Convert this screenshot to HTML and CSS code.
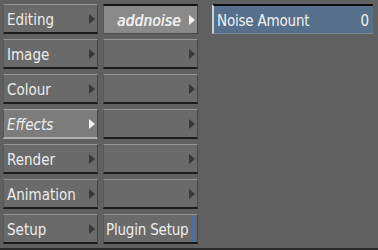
FILE: index.html
```html
<!DOCTYPE html>
<html lang="en">
<head>
  <meta charset="UTF-8">
  <title>addnoise</title>
  <link rel="stylesheet" href="styles.css">
</head>
<body>
  <section class="panel">
    <!-- Each row: menu button, submenu button, parameter cell -->
    <button class="btn">Editing<span class="arrow"></span></button>
    <button class="btn btn-active">addnoise<span class="arrow"></span></button>
    <div class="field"><span>Noise Amount</span><span>0</span></div>

    <button class="btn">Image<span class="arrow"></span></button>
    <button class="btn"><span class="arrow"></span></button>
    <div class="empty"></div>

    <button class="btn">Colour<span class="arrow"></span></button>
    <button class="btn"><span class="arrow"></span></button>
    <div class="empty"></div>

    <button class="btn btn-current">Effects<span class="arrow"></span></button>
    <button class="btn"><span class="arrow"></span></button>
    <div class="empty"></div>

    <button class="btn">Render<span class="arrow"></span></button>
    <button class="btn"><span class="arrow"></span></button>
    <div class="empty"></div>

    <button class="btn">Animation<span class="arrow"></span></button>
    <button class="btn"><span class="arrow"></span></button>
    <div class="empty"></div>

    <button class="btn">Setup<span class="arrow"></span></button>
    <button class="btn btn-plugin">Plugin Setup<span class="bar"></span></button>
    <div class="empty"></div>
  </section>
</body>
</html>
```

FILE: styles.css
```css
body {
  margin: 0;
  width: 378px;
  height: 250px;
  background: #606060;
  font-family: "DejaVu Sans Condensed", "DejaVu Sans", sans-serif;
  font-stretch: condensed;
  overflow: hidden;
  border-bottom: 2px solid #2a2a2a;
  box-sizing: border-box;
}
.panel {
  display: grid;
  grid-template-columns: 95px 95px 170px;
  grid-auto-rows: 30px;
  column-gap: 5px;
  row-gap: 5px;
  padding: 4px 0 0 3px;
}
.btn {
  position: relative;
  display: flex;
  align-items: center;
  padding: 2px 0 0 3px;
  margin: 0;
  background: #6a6a6a;
  color: #ededed;
  font-family: inherit;
  font-stretch: condensed;
  font-size: 15px;
  text-align: left;
  white-space: nowrap;
  border: none;
  border-top: 1px solid #959595;
  border-left: 1px solid #585858;
  border-right: 1px solid #464646;
  border-bottom: 2px solid #1c1c1c;
  box-sizing: border-box;
}
.arrow {
  position: absolute;
  right: 2px;
  top: 50%;
  margin-top: -5px;
  width: 0;
  height: 0;
  border-top: 5px solid transparent;
  border-bottom: 5px solid transparent;
  border-left: 6px solid #383838;
}
.btn-current {
  background: #7c7c7c;
  font-style: italic;
  border-top-color: #a5a5a5;
  border-bottom-color: #b0b0b0;
}
.btn-current .arrow,
.btn-active .arrow {
  border-left-color: #f4f4f4;
}
.btn-active {
  background: #8a8a8a;
  font-style: italic;
  padding-left: 13px;
  text-shadow: 0.6px 0 0 #f4f4f4;
  letter-spacing: 0.3px;
  border-top: 2px solid #141414;
  border-bottom: 1px solid #4a4a4a;
}
.btn-plugin {
  padding-left: 2px;
  letter-spacing: -0.2px;
}
.bar {
  position: absolute;
  right: 1px;
  top: 1px;
  bottom: 0;
  width: 5px;
  background: #4f6f9a;
}
.field {
  display: flex;
  justify-content: space-between;
  align-items: center;
  margin-left: 9px;
  padding: 2px 4px 0 3px;
  background: #56708c;
  color: #f0f0f0;
  font-size: 15px;
  letter-spacing: -0.2px;
  border-top: 2px solid #0e0e0e;
  border-left: 2px solid #c8d0d8;
  border-bottom: 1px solid #7a8694;
  box-sizing: border-box;
}
```
